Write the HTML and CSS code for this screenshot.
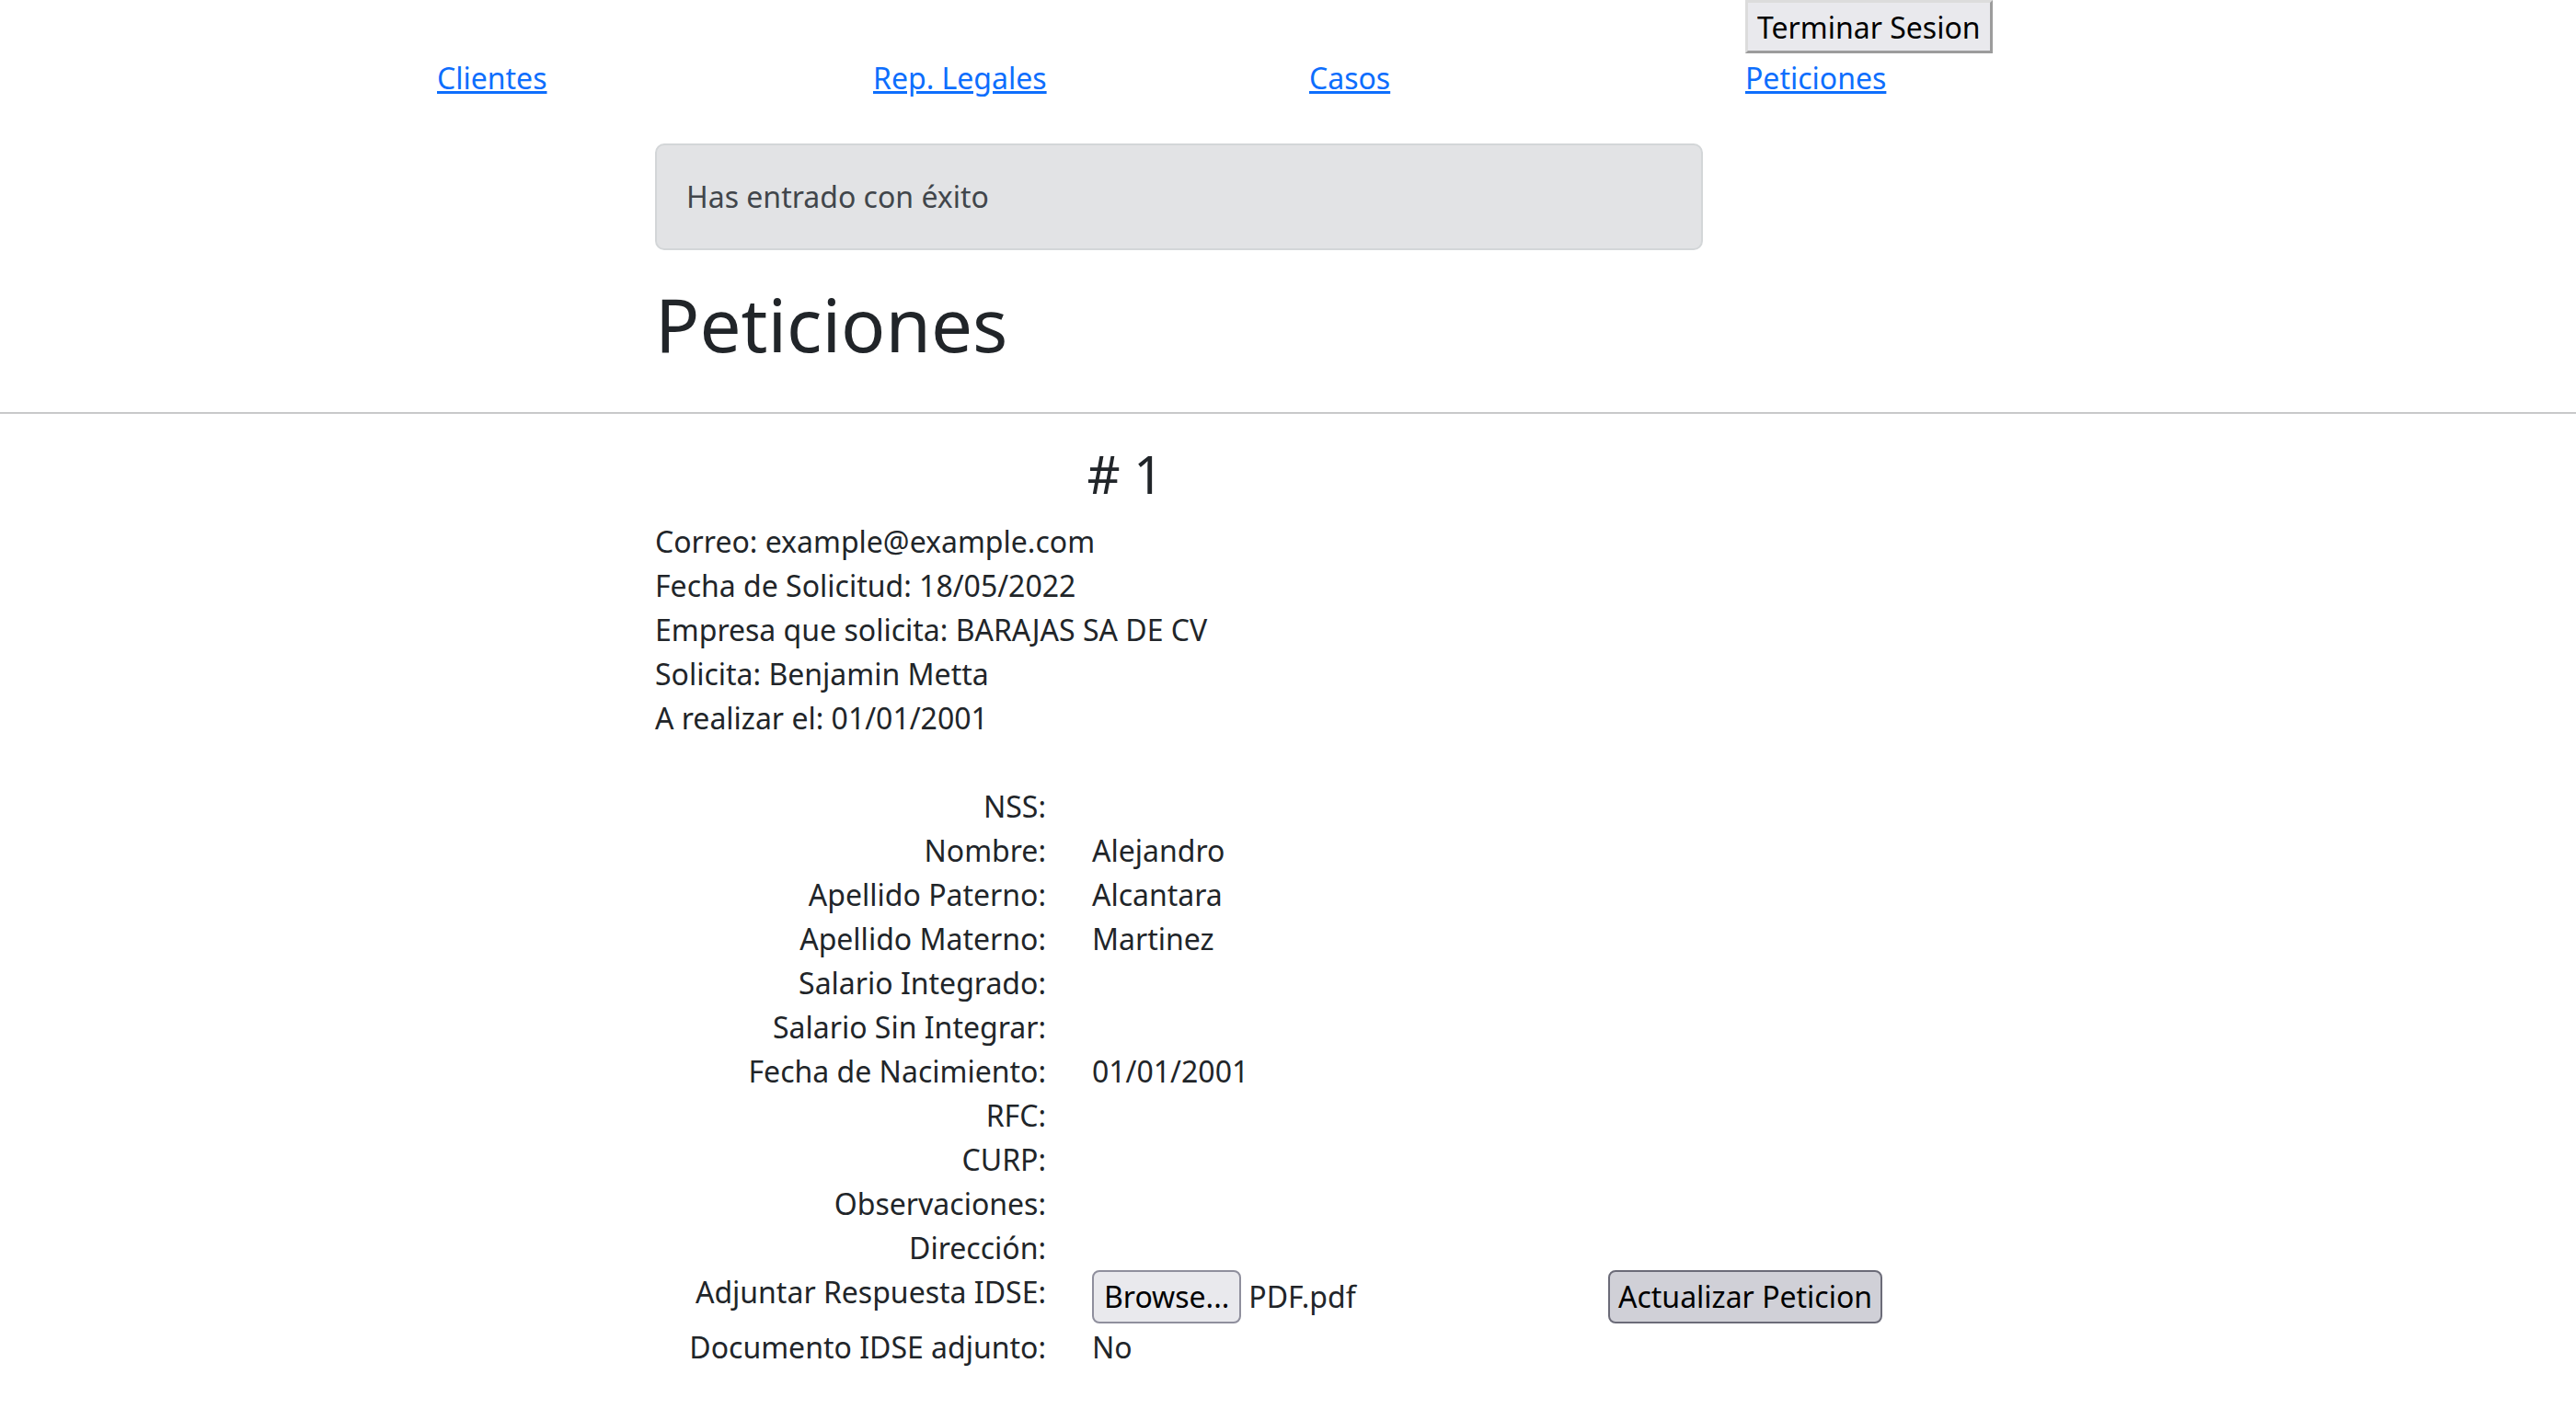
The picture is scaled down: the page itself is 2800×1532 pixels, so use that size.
FILE: index.html
```html
<!DOCTYPE html>
<html lang="es">
<head>
<meta charset="utf-8">
<title>Peticiones</title>
<link rel="stylesheet" href="styles.css">
</head>
<body>
<nav class="topnav">
  <div class="navgrid">
    <button class="btn-logout" type="button">Terminar Sesion</button>
  </div>
  <div class="navgrid links">
    <a href="#">Clientes</a>
    <a href="#">Rep. Legales</a>
    <a href="#">Casos</a>
    <a href="#">Peticiones</a>
  </div>
</nav>

<main class="page">
  <div class="alert">Has entrado con éxito</div>
  <h1 class="title">Peticiones</h1>
</main>

<hr class="divider">

<section class="detail">
  <h3 class="num"># 1</h3>
  <p class="info">
    Correo: example@example.com<br>
    Fecha de Solicitud: 18/05/2022<br>
    Empresa que solicita: BARAJAS SA DE CV<br>
    Solicita: Benjamin Metta<br>
    A realizar el: 01/01/2001
  </p>

  <table class="details">
    <colgroup>
      <col class="c-lbl">
      <col class="c-val">
      <col class="c-act">
    </colgroup>
    <tr><td class="lbl">NSS:</td><td class="val"></td><td></td></tr>
    <tr><td class="lbl">Nombre:</td><td class="val">Alejandro</td><td></td></tr>
    <tr><td class="lbl">Apellido Paterno:</td><td class="val">Alcantara</td><td></td></tr>
    <tr><td class="lbl">Apellido Materno:</td><td class="val">Martinez</td><td></td></tr>
    <tr><td class="lbl">Salario Integrado:</td><td class="val"></td><td></td></tr>
    <tr><td class="lbl">Salario Sin Integrar:</td><td class="val"></td><td></td></tr>
    <tr><td class="lbl">Fecha de Nacimiento:</td><td class="val">01/01/2001</td><td></td></tr>
    <tr><td class="lbl">RFC:</td><td class="val"></td><td></td></tr>
    <tr><td class="lbl">CURP:</td><td class="val"></td><td></td></tr>
    <tr><td class="lbl">Observaciones:</td><td class="val"></td><td></td></tr>
    <tr><td class="lbl">Dirección:</td><td class="val"></td><td></td></tr>
    <tr class="upload-row">
      <td class="lbl">Adjuntar Respuesta IDSE:</td>
      <td class="val"><span class="file"><button class="btn-file" type="button">Browse...</button><span class="fname">PDF.pdf</span></span></td>
      <td><button class="btn-update" type="button">Actualizar Peticion</button></td>
    </tr>
    <tr><td class="lbl">Documento IDSE adjunto:</td><td class="val">No</td><td></td></tr>
  </table>
</section>
</body>
</html>
```

FILE: styles.css
```css
html, body {
  margin: 0;
  padding: 0;
}

body {
  font-family: "Noto Sans", "Open Sans", sans-serif;
  font-size: 32px;
  line-height: 1.5;
  color: #212529;
  background: #ffffff;
}

/* ---------- top navigation ---------- */
.topnav {
  padding-left: 475px;
}

.navgrid {
  display: grid;
  grid-template-columns: repeat(4, 474px);
}

.btn-logout {
  grid-column: 4;
  justify-self: start;
  font: inherit;
  line-height: 48px;
  color: #000;
  background: #e9e9ed;
  padding: 3px 10px 1px;
  border-style: solid;
  border-width: 3px;
  border-color: #dcdcdc #9c9c9c #9c9c9c #dcdcdc;
  border-radius: 0;
}

.links {
  margin-top: 3px;
}

.links a {
  color: #0d6efd;
  text-decoration: underline;
  justify-self: start;
}

/* ---------- header area ---------- */
.page {
  margin-left: 712px;
  width: 1139px;
}

.alert {
  margin-top: 47px;
  margin-bottom: 32px;
  padding: 32px;
  background: #e2e3e5;
  border: 2px solid #d3d6d8;
  border-radius: 10px;
  color: #41464b;
}

.title {
  margin: 0 0 16px;
  font-size: 80px;
  font-weight: 400;
  line-height: 1.2;
}

.divider {
  margin: 48px 0 32px;
  border: 0;
  border-top: 2px solid #c8c9ca;
  height: 0;
}

/* ---------- detail section ---------- */
.detail {
  margin-left: 712px;
}

.num {
  width: 1022px;
  margin: 0 0 16px;
  font-size: 56px;
  font-weight: 400;
  line-height: 1.2;
  text-align: center;
}

.info {
  margin: 0 0 48px;
}

.details {
  border-collapse: collapse;
  border-spacing: 0;
  table-layout: fixed;
  width: 1340px;
}

.c-lbl { width: 475px; }
.c-val { width: 561px; }
.c-act { width: 304px; }

.details td {
  padding: 0;
  vertical-align: top;
  white-space: nowrap;
}

.details .lbl {
  padding-right: 50px;
  text-align: right;
}

.file {
  display: inline-block;
}

.btn-file,
.btn-update {
  font: inherit;
  line-height: 48px;
  color: #000;
  padding: 3px 11px;
  border: 2px solid #8f8f9d;
  border-radius: 8px;
  background: #e9e9ed;
}

.btn-file {
  margin-right: 8px;
}

.btn-update {
  padding: 3px 9px;
  background: #d0d0d7;
  border-color: #6b6b78;
}

.upload-row td {
  padding-bottom: 2px;
}
```
